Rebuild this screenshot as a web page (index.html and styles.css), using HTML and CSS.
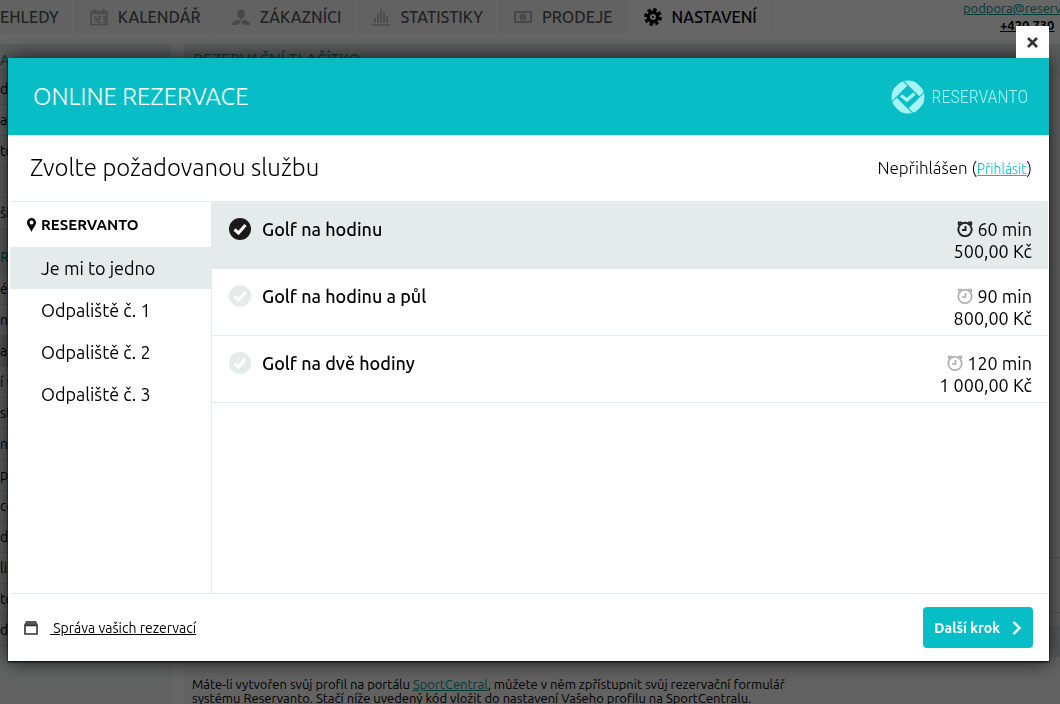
FILE: index.html
```
<!DOCTYPE html>
<html lang="cs">
<head>
    <meta charset="UTF-8">
    <meta name="viewport" content="width=device-width, initial-scale=1.0">
    <title>Online rezervace</title>
    <link rel="stylesheet" href="styles.css">
</head>
<body>
    <!-- Administration page under the dialog -->
    <div class="page">
        <header class="topbar">
            <nav class="tabs">
                <a href="#" class="tab first">EHLEDY</a>
                <a href="#" class="tab">
                    <svg width="18" height="17" viewBox="0 0 18 17" fill="none" stroke="currentColor"><path d="M1 2.5h16v13H1zM1 4.5h16M4.5 0v4M13.5 0v4" stroke-width="1.5"/><path d="M4 8h2v5M8 7.5h2.500v2.500H8V13h3M13 7.5h2V13h-2M13 10h2" stroke-width="1.4"/></svg>
                    KALENDÁŘ
                </a>
                <a href="#" class="tab">
                    <svg width="18" height="17" viewBox="0 0 18 17" fill="currentColor"><path d="M9 .5c-2.600 0-4 2-3.800 4.500.2 2.300 1.200 4 2.300 4.800L9 11.200l1.500-1.400c1.100-.8 2.100-2.500 2.300-4.800C13 2.500 11.600.5 9 .5zM6 10.500 9 13l-3.500 3H0c0-3 2-4 6-5.500zM12 10.500 9 13l3.500 3H18c0-3-2-4-6-5.500z"/></svg>
                    ZÁKAZNÍCI
                </a>
                <a href="#" class="tab">
                    <svg width="18" height="17" viewBox="0 0 18 17" stroke="currentColor" stroke-width="1.600"><path d="M0 16h18M3 14V9M6 14V4M9 14V0M12 14V3M15 14V7"/></svg>
                    STATISTIKY
                </a>
                <a href="#" class="tab">
                    <svg width="18" height="12" viewBox="0 0 18 12"><path fill="none" stroke="currentColor" stroke-width="2" d="M1 1h16v10H1z"/><circle cx="9" cy="6" r="3.500" fill="currentColor"/><path stroke="#ddd" d="M9 4v4"/></svg>
                    PRODEJE
                </a>
                <a href="#" class="tab active">
                    <svg width="18" height="18" viewBox="0 0 18 18"><circle cx="9" cy="9" r="7.400" fill="none" stroke="currentColor" stroke-width="3" stroke-dasharray="3.400 2.410"/><circle cx="9" cy="9" r="4.700" fill="none" stroke="currentColor" stroke-width="3.400"/><circle cx="9" cy="9" r="1" fill="currentColor"/></svg>
                    NASTAVENÍ
                </a>
            </nav>
            <div class="contact">
                <a href="#">podpora@reserv</a>
                <a href="#" class="phone">+420 730</a>
            </div>
        </header>

        <div class="columns">
            <aside class="settings">
                <h2>A</h2>
                <ul>
                    <li>d</li>
                    <li>ar</li>
                    <li>to</li>
                    <li></li>
                    <li>ší</li>
                </ul>
                <h2>RV</h2>
                <ul>
                    <li>é</li>
                    <li>no</li>
                    <li class="current">a</li>
                    <li>í ú</li>
                    <li>st</li>
                    <li>ne</li>
                    <li>po</li>
                    <li>co</li>
                    <li>d</li>
                    <li>lir</li>
                    <li>te</li>
                    <li>d</li>
                </ul>
            </aside>
            <main class="content">
                <h2>REZERVAČNÍ TLAČÍTKO</h2>
                <div class="preview"></div>
                <div class="options"></div>
                <div class="stripe"></div>
                <p>Máte-li vytvořen svůj profil na portálu <a href="#">SportCentral</a>, můžete v něm zpřístupnit svůj rezervační formulář<br>
                systému Reservanto. Stačí níže uvedený kód vložit do nastavení Vašeho profilu na SportCentralu.</p>
            </main>
        </div>
    </div>

    <!-- Reservation dialog -->
    <div class="overlay">
        <div class="dialog" role="dialog" aria-labelledby="dialogTitle">
            <button type="button" class="close" aria-label="Zavřít">
                <svg width="11" height="11" viewBox="0 0 11 11" stroke="currentColor" stroke-width="2.600"><path d="M1 1l9 9M10 1l-9 9"/></svg>
            </button>

            <div class="dialog-header">
                <h1 id="dialogTitle">ONLINE REZERVACE</h1>
                <div class="logo">
                    <svg width="34" height="34" viewBox="0 0 34 34">
                        <clipPath id="logoRound"><circle cx="17" cy="17" r="16.500"/></clipPath>
                        <g clip-path="url(#logoRound)">
                            <path fill="currentColor" transform="translate(17 17) rotate(45)" d="M-16-16H7.500V-8.500H-16zM8.500-16H16V7.500H8.500zM-7.500 8.500H16V16H-7.500zM-16-7.500h7.500V16H-16z"/>
                        </g>
                        <path d="M10 15.500l6 4.500 7.500-6.500" fill="none" stroke="currentColor" stroke-width="3.400"/>
                    </svg>
                    <span>RESERVANTO</span>
                </div>
            </div>

            <div class="dialog-title">
                <h2>Zvolte požadovanou službu</h2>
                <p>Nepřihlášen (<a href="#">Přihlásit</a>)</p>
            </div>

            <div class="dialog-body">
                <div class="places">
                    <h3>
                        <svg width="9" height="14" viewBox="0 0 9 14"><path fill="currentColor" fill-rule="evenodd" d="M4.500 0C2 0 0 2 0 4.500 0 7.500 3 10 4.500 14 6 10 9 7.500 9 4.500 9 2 7 0 4.500 0zm0 2.500a2 2 0 1 1 0 4 2 2 0 0 1 0-4z"/></svg>
                        RESERVANTO
                    </h3>
                    <a href="#" class="place selected">Je mi to jedno</a>
                    <a href="#" class="place">Odpaliště č. 1</a>
                    <a href="#" class="place">Odpaliště č. 2</a>
                    <a href="#" class="place">Odpaliště č. 3</a>
                </div>

                <form class="services" id="services">
                    <label class="service">
                        <input type="radio" name="service" value="60" checked>
                        <span class="check"><svg width="14" height="12" viewBox="0 0 14 12"><path d="M1.500 6.500l4 3.500 7-8"/></svg></span>
                        <span class="name">Golf na hodinu</span>
                        <span class="price">
                            <svg class="clock" width="16" height="16" viewBox="0 0 16 16"><circle cx="8" cy="8.500" r="6.700"/><path d="M8.500 5v4H5"/><path d="M1.800 4V1.500h3M14.200 4V1.500h-3"/></svg>
                            60 min<br>500,00 Kč
                        </span>
                    </label>
                    <label class="service">
                        <input type="radio" name="service" value="90">
                        <span class="check"><svg width="14" height="12" viewBox="0 0 14 12"><path d="M1.500 6.500l4 3.500 7-8"/></svg></span>
                        <span class="name">Golf na hodinu a půl</span>
                        <span class="price">
                            <svg class="clock" width="16" height="16" viewBox="0 0 16 16"><circle cx="8" cy="8.500" r="6.700"/><path d="M8.500 5v4H5"/><path d="M1.800 4V1.500h3M14.200 4V1.500h-3"/></svg>
                            90 min<br>800,00 Kč
                        </span>
                    </label>
                    <label class="service">
                        <input type="radio" name="service" value="120">
                        <span class="check"><svg width="14" height="12" viewBox="0 0 14 12"><path d="M1.500 6.500l4 3.500 7-8"/></svg></span>
                        <span class="name">Golf na dvě hodiny</span>
                        <span class="price">
                            <svg class="clock" width="16" height="16" viewBox="0 0 16 16"><circle cx="8" cy="8.500" r="6.700"/><path d="M8.500 5v4H5"/><path d="M1.800 4V1.500h3M14.200 4V1.500h-3"/></svg>
                            120 min<br>1 000,00 Kč
                        </span>
                    </label>
                </form>
            </div>

            <div class="dialog-footer">
                <div class="manage">
                    <svg width="14" height="14" viewBox="0 0 14 14"><path d="M2 0h10l2 4H0z" fill="#555"/><path d="M1 4.500h12V13H1z" fill="none" stroke="#333" stroke-width="1.600"/></svg>
                    <a href="#">&nbsp;Správa vašich rezervací</a>
                </div>
                <button type="submit" form="services" class="next">
                    Další krok
                    <svg width="9" height="14" viewBox="0 0 9 14"><path d="M1.500 1l6 6-6 6" fill="none" stroke="currentColor" stroke-width="2.400"/></svg>
                </button>
            </div>
        </div>
    </div>
</body>
</html>
```
FILE: styles.css
```
* {
    margin: 0;
    padding: 0;
    box-sizing: border-box;
}

body {
    font-family: Ubuntu, 'Noto Sans', 'Open Sans', sans-serif;
    font-size: 18px;
    color: black;
    background: white;
    height: 100vh;
    overflow: hidden;
}

/* Page under the dialog */
.page {
    height: 100vh;
    overflow: hidden;
}

.topbar {
    display: flex;
    justify-content: space-between;
    height: 44px;
}

.tabs {
    display: flex;
    height: 34px;
    background: #f6f6f6;
}

.tab {
    display: flex;
    align-items: center;
    gap: 10px;
    padding: 0 14px 0 16px;
    border-right: 1px solid white;
    color: #555;
    font-size: 16px;
    font-weight: 500;
    text-decoration: none;
    white-space: nowrap;
}

.tab svg {
    color: #b5b5b5;
}

.tab.first {
    padding-left: 0;
}

.tab.active {
    border-right-color: #eee;
    background: white;
    color: black;
}

.tab.active svg {
    color: black;
}

.contact {
    flex: none;
    width: 97px;
    font-size: 13px;
    line-height: 17px;
    white-space: nowrap;
}

.contact a {
    display: block;
    color: #009494;
}

.contact .phone {
    padding-left: 37px;
    color: black;
    font-weight: bold;
}

.columns {
    display: flex;
    gap: 13px;
}

.settings {
    flex: none;
    width: 171px;
    background: #f4f6f6;
    font-size: 14px;
}

.settings h2 {
    height: 45px;
    padding-top: 20px;
    background: #e5ebeb;
    color: #009494;
    font-size: 14px;
    font-weight: 500;
}

.settings h2:first-child {
    height: 30px;
    padding-top: 8px;
}

.settings li {
    height: 31px;
    border-bottom: 1px solid #d8dede;
    line-height: 30px;
    list-style: none;
}

.settings .current {
    background: #cfdcdc;
}

.content {
    flex: 1;
    background: #f4f4f4;
    font-size: 13px;
}

.content h2 {
    height: 30px;
    padding: 7px 9px 0;
    background: #e5ebeb;
    color: #009494;
    font-size: 16px;
    font-weight: 400;
}

.preview {
    height: 484px;
    border-bottom: 1px solid #d0d0d0;
}

.options {
    height: 55px;
    border-bottom: 1px solid #d0d0d0;
}

.stripe {
    height: 31px;
    margin-top: 13px;
    background: #dde6e6;
}

.content p {
    padding: 20px 8px;
    line-height: 14px;
    white-space: nowrap;
}

.content a {
    color: #009494;
}

/* Dialog */
.overlay {
    position: fixed;
    inset: 0;
    display: flex;
    padding: 58px 11px 43px 8px;
    background: rgba(0, 0, 0, 0.6);
}

.dialog {
    position: relative;
    flex: 1;
    display: flex;
    flex-direction: column;
    background: white;
    box-shadow: 0 1px 2px black, 0 0 20px rgba(0, 0, 0, 0.8);
}

.close {
    position: absolute;
    right: 0;
    bottom: 100%;
    display: flex;
    align-items: center;
    justify-content: center;
    width: 33px;
    height: 32px;
    border: none;
    background: white;
    color: #333;
    cursor: pointer;
}

.dialog-header {
    display: flex;
    align-items: center;
    justify-content: space-between;
    height: 77px;
    padding: 0 21px 0 25px;
    background: #08bec6;
    color: white;
}

.dialog-header h1 {
    font-size: 24px;
    font-weight: 300;
}

.logo {
    display: flex;
    align-items: center;
    gap: 7px;
    color: #a5f3f5;
}

.logo span {
    font-family: 'Roboto Condensed', 'Ubuntu Condensed', 'Open Sans Condensed', Ubuntu, sans-serif;
    font-size: 18px;
    font-weight: 300;
}

.dialog-title {
    display: flex;
    align-items: center;
    justify-content: space-between;
    height: 66px;
    padding: 0 17px 2px 22px;
}

.dialog-title h2 {
    font-size: 24px;
    font-weight: 300;
}

.dialog-title p {
    font-size: 17px;
    font-weight: 300;
}

.dialog-title a {
    color: #08bec6;
    font-size: 14px;
}

.dialog-body {
    flex: 1;
    display: flex;
    margin: 0 1px 0 2px;
    border-top: 1px solid #e5ebeb;
    border-bottom: 1px solid #e5ebeb;
}

.places {
    flex: none;
    width: 202px;
    border-right: 1px solid #e5ebeb;
}

.places h3 {
    display: flex;
    align-items: center;
    gap: 5px;
    height: 45px;
    padding-left: 17px;
    font-size: 15px;
    font-weight: bold;
}

.place {
    display: block;
    height: 42px;
    padding-left: 31px;
    color: black;
    line-height: 42px;
    text-decoration: none;
}

.place.selected {
    background: #e5ebeb;
}

.services {
    flex: 1;
}

.service {
    display: flex;
    align-items: flex-start;
    height: 67px;
    padding: 16px 16px 0 17px;
    border-bottom: 1px solid #e5ebeb;
    cursor: pointer;
}

.service input {
    appearance: none;
    width: 0;
    height: 0;
}

.check {
    display: flex;
    align-items: center;
    justify-content: center;
    width: 22px;
    height: 22px;
    border-radius: 50%;
    background: #e5ebeb;
}

.check path {
    fill: none;
    stroke: white;
    stroke-width: 3;
}

.name {
    flex: 1;
    padding-left: 11px;
    font-weight: 500;
    line-height: 22px;
}

.price {
    line-height: 22px;
    text-align: right;
}

.clock {
    color: #aaa;
    vertical-align: -1px;
    fill: none;
    stroke: currentColor;
    stroke-width: 1.6;
}

.service:has(input:checked) {
    background: #e5ebeb;
}

.service input:checked + .check {
    background: #1a1a1a;
}

.service:has(input:checked) .clock {
    color: #222;
    stroke-width: 2;
}

.dialog-footer {
    display: flex;
    align-items: center;
    justify-content: space-between;
    height: 67px;
    padding: 0 16px;
}

.manage {
    display: flex;
    align-items: center;
    gap: 12px;
    font-size: 14px;
}

.manage a {
    color: black;
}

.next {
    display: flex;
    align-items: center;
    justify-content: space-between;
    gap: 12px;
    height: 41px;
    padding: 0 12px 0 11px;
    border: none;
    border-radius: 4px;
    background: #08bec6;
    color: white;
    font-family: inherit;
    font-size: 14px;
    font-weight: bold;
    cursor: pointer;
}
```
